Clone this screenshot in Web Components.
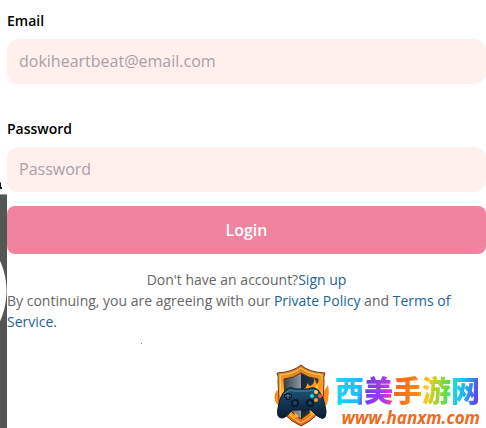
<!DOCTYPE html>
<html lang="en">
<head>
  <meta charset="UTF-8">
  <meta name="viewport" content="width=device-width, initial-scale=1.0">
  <title>Login</title>
  <style>
    body {
      margin: 0;
      background: #fff;
      color: #000;
      font-family: "Open Sans", "Noto Sans", sans-serif;
      font-size: 14px;
      line-height: 21px;
    }
  </style>
</head>
<body>
  <login-page>
    <side-art slot="art"></side-art>
    <login-form>
      <form-field label="Email" type="email" placeholder="dokiheartbeat@email.com"></form-field>
      <form-field label="Password" type="password" placeholder="Password"></form-field>
      <login-button slot="action">Login</login-button>
      <login-legal slot="legal"></login-legal>
    </login-form>
    <site-brand slot="brand"></site-brand>
  </login-page>

  <script>
    class LoginPage extends HTMLElement {
      connectedCallback() {
        this.attachShadow({ mode: 'open' });
        this.shadowRoot.innerHTML = `
          <style>
            :host {
              display: flex;
              min-height: 100vh;
            }
            main {
              flex: 1;
              min-width: 0;
              display: flex;
              flex-direction: column;
              justify-content: space-between;
              padding-top: 10px;
              box-sizing: border-box;
            }
          </style>
          <slot name="art"></slot>
          <main>
            <slot></slot>
            <slot name="brand"></slot>
          </main>
        `;
      }
    }

    // Edge of the illustration next to the form
    class SideArt extends HTMLElement {
      connectedCallback() {
        this.attachShadow({ mode: 'open' });
        this.shadowRoot.innerHTML = `
          <style>
            :host {
              display: flex;
              flex-direction: column;
              width: 7px;
              flex: none;
              overflow: hidden;
            }
            .tip {
              display: block;
              margin-top: 180px;
            }
            .panel {
              flex: 1;
              background: radial-gradient(circle at -67px 96px, #fff 73px, #555 74px);
            }
          </style>
          <svg class="tip" width="7" height="15" viewBox="0 0 7 15" aria-hidden="true">
            <path d="M0 2 L1 3 L1 7 L2 7 L2 9 L0 9 Z" fill="#111"/>
            <path d="M0 14 H7 V15 H0 Z" fill="#999"/>
          </svg>
          <div class="panel"></div>
        `;
      }
    }

    class LoginForm extends HTMLElement {
      connectedCallback() {
        this.attachShadow({ mode: 'open' });
        this.shadowRoot.innerHTML = `
          <style>
            :host {
              display: block;
            }
            .fields {
              display: flex;
              flex-direction: column;
              gap: 34px;
              margin-bottom: 14px;
            }
            .legal {
              margin-top: 15px;
            }
          </style>
          <div class="fields"><slot></slot></div>
          <slot name="action"></slot>
          <div class="legal"><slot name="legal"></slot></div>
        `;
      }
    }

    class FormField extends HTMLElement {
      connectedCallback() {
        const label = this.getAttribute('label');
        this.attachShadow({ mode: 'open' });
        this.shadowRoot.innerHTML = `
          <style>
            :host {
              display: flex;
              flex-direction: column;
              gap: 8px;
            }
            label {
              font-weight: 600;
            }
            input {
              width: 100%;
              height: 45px;
              box-sizing: border-box;
              padding: 0 12px 2px;
              border: none;
              border-radius: 12px;
              background: #fff0ee;
              color: #333;
              font-family: inherit;
              font-size: 16px;
              outline: none;
            }
            input::placeholder {
              color: #a8a0a6;
              opacity: 1;
            }
          </style>
          <label for="field">${label}</label>
          <input id="field" type="${this.getAttribute('type')}" placeholder="${this.getAttribute('placeholder')}">
        `;
      }
    }

    class LoginButton extends HTMLElement {
      connectedCallback() {
        this.attachShadow({ mode: 'open' });
        this.shadowRoot.innerHTML = `
          <style>
            :host {
              display: block;
            }
            button {
              width: 100%;
              height: 48px;
              border: none;
              border-radius: 8px;
              background: #f0849f;
              color: #fff;
              font-family: inherit;
              font-size: 16px;
              font-weight: 600;
              cursor: pointer;
            }
          </style>
          <button type="button"><slot></slot></button>
        `;
      }
    }

    class LoginLegal extends HTMLElement {
      connectedCallback() {
        this.attachShadow({ mode: 'open' });
        this.shadowRoot.innerHTML = `
          <style>
            :host {
              display: block;
              color: #666;
            }
            p {
              margin: 0;
            }
            .signup {
              text-align: center;
            }
            .terms {
              padding-right: 12px;
            }
            a {
              color: #22639c;
              text-decoration: none;
            }
            .dot {
              width: 1px;
              height: 1px;
              margin: 11px 0 0 134px;
              background: #4a9bb0;
            }
          </style>
          <p class="signup">Don't have an account?<a href="#signup">Sign up</a></p>
          <p class="terms">By continuing, you are agreeing with our <a href="#privacy">Private Policy</a> and <a href="#terms">Terms of Service.</a></p>
          <div class="dot"></div>
        `;
      }
    }

    class SiteBrand extends HTMLElement {
      connectedCallback() {
        this.attachShadow({ mode: 'open' });
        this.shadowRoot.innerHTML = `
          <style>
            :host {
              display: flex;
              justify-content: flex-end;
              align-items: flex-start;
              gap: 5px;
              padding-right: 6px;
            }
            svg {
              display: block;
            }
            .text {
              display: flex;
              flex-direction: column;
              padding-top: 8px;
            }
            .name {
              font-family: "Noto Sans CJK SC", sans-serif;
              font-size: 29px;
              font-weight: 900;
              line-height: 35px;
              background: linear-gradient(100deg, #18dcf0 0%, #20b8ff 19%, #6a3af0 21%, #c03ae0 38%, #ff6420 42%, #ff8a10 57%, #ffc81c 62%, #60e040 76%, #20d8e0 80%, #1cb4f0 88%, #6a35e8 98%);
              -webkit-background-clip: text;
              background-clip: text;
              color: transparent;
            }
            .url {
              align-self: flex-end;
              font-size: 17px;
              font-style: italic;
              font-weight: 700;
              line-height: 21px;
              color: #f06a20;
              text-decoration: none;
            }
          </style>
          <svg width="56" height="64" viewBox="0 0 56 64" aria-hidden="true">
            <defs>
              <linearGradient id="fire" x1="0" y1="0" x2="0" y2="1">
                <stop offset="0" stop-color="#d8741c"/>
                <stop offset=".45" stop-color="#ffb52c"/>
                <stop offset="1" stop-color="#ec6512"/>
              </linearGradient>
              <linearGradient id="steel" x1="0" y1="0" x2="1" y2="0">
                <stop offset="0" stop-color="#344250"/>
                <stop offset=".5" stop-color="#8d979f"/>
                <stop offset=".5" stop-color="#182838"/>
                <stop offset="1" stop-color="#26384a"/>
              </linearGradient>
              <linearGradient id="pad" x1="0" y1="0" x2="0" y2="1">
                <stop offset="0" stop-color="#20587a"/>
                <stop offset=".5" stop-color="#123653"/>
                <stop offset="1" stop-color="#0a1b30"/>
              </linearGradient>
            </defs>
            <path d="M3 40 Q-2 33 3 26 L6 32 L7 14 L49 14 L50 27 L54 21 Q56 30 53 40 L44 50 L11 50 Z" fill="#ff8b16"/>
            <path d="M27 1 Q34 8 51 9 Q49 13 50 18 L49 36 Q48 52 27 62 Q6 52 5 36 L4 18 Q5 13 3 9 Q19 8 27 1 Z" fill="url(#fire)" stroke="#71351c"/>
            <path d="M27 4 Q34 10 48 11 L47 34 Q46 49 27 59 Q8 49 7 34 L6 11 Q20 10 27 4 Z" fill="none" stroke="#ffd171"/>
            <path d="M27 9 Q34 14 44 15 L43 34 Q42 46 27 55 Q12 46 11 34 L10 15 Q20 14 27 9 Z" fill="url(#steel)" stroke="#562b19"/>
            <path d="M27 26 Q34 24 33 19 L36 22 Q41 20 40 14 L43 20 L48 14 Q51 23 45 34 L25 34 Z" fill="#ff9920"/>
            <path d="M35 29 Q41 27 43 20 Q45 27 41 32 Z" fill="#ffdf62"/>
            <path d="M14 45 L20 53 L21 48 L25 53 L18 54 Z M35 46 L38 52 L42 44 Z" fill="#ffac2b"/>
            <path d="M12 26 Q16 22 21 25 L34 25 Q40 22 44 26 Q50 33 52 47 Q52 56 47 54 Q43 53 37 46 L18 46 Q12 54 8 54 Q2 54 4 44 Q6 31 12 26 Z" fill="url(#pad)" stroke="#081527"/>
            <path d="M10 30 Q15 25 20 27 H35 Q40 25 44 30" fill="none" stroke="#3b8aaa"/>
            <path d="M14 29 V36 M10 32 H18" stroke="#071a2d" stroke-width="4"/>
            <path d="M14 30 V35 M11 32 H17" stroke="#67859a"/>
            <circle cx="21" cy="39" r="4" fill="#091a2c"/>
            <circle cx="21" cy="39" r="2" fill="#28465d"/>
            <circle cx="36" cy="39" r="4" fill="#091a2c"/>
            <circle cx="36" cy="39" r="2" fill="#28465d"/>
            <circle cx="42" cy="28" r="2" fill="#f3d34b"/>
            <circle cx="38" cy="32" r="2" fill="#43c7d4"/>
            <circle cx="46" cy="32" r="2" fill="#ff5534"/>
            <circle cx="42" cy="36" r="2" fill="#f2a126"/>
          </svg>
          <div class="text">
            <span class="name" lang="zh">西美手游网</span>
            <a class="url" href="#home">www.hanxm.com</a>
          </div>
        `;
      }
    }

    customElements.define('login-page', LoginPage);
    customElements.define('side-art', SideArt);
    customElements.define('login-form', LoginForm);
    customElements.define('form-field', FormField);
    customElements.define('login-button', LoginButton);
    customElements.define('login-legal', LoginLegal);
    customElements.define('site-brand', SiteBrand);
  </script>
</body>
</html>
